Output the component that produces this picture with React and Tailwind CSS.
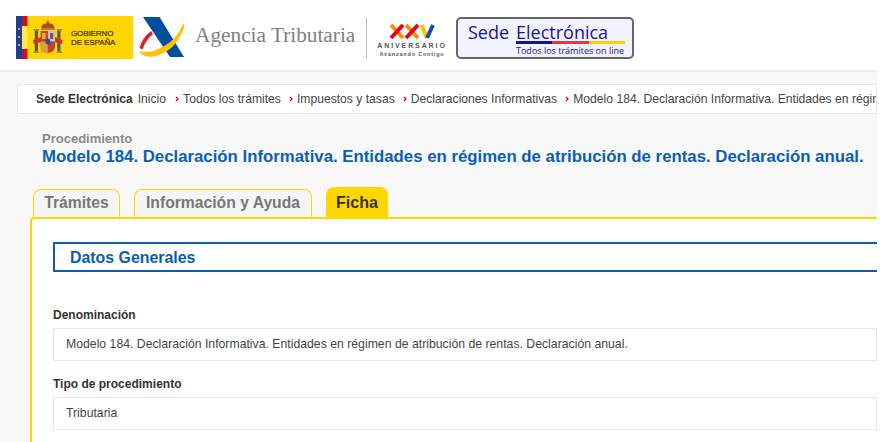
import React from 'react';

const crumbs = [
  'Todos los trámites',
  'Impuestos y tasas',
  'Declaraciones Informativas',
  'Modelo 184. Declaración Informativa. Entidades en régimen de atribución de rentas. Declaración anual.',
];

const GobiernoLogo = () => (
  <div className="flex w-[117px] h-[43px] items-center bg-[#ffd500]">
    <svg width="52" height="43" viewBox="0 0 52 43" className="shrink-0">
      <rect x="0" y="0" width="6" height="43" fill="#1d3f94" />
      <rect x="6" y="0" width="5.5" height="10" fill="#c8102e" />
      <rect x="6" y="10" width="5.5" height="23" fill="#ffe94d" />
      <rect x="6" y="33" width="5.5" height="10" fill="#c8102e" />
      <circle cx="3" cy="13" r="1" fill="#ffd500" />
      <circle cx="3" cy="21" r="1" fill="#ffd500" />
      <circle cx="3" cy="29" r="1" fill="#ffd500" />
      {/* escudo */}
      <g transform="translate(1.7,1) scale(0.9,1)">
        <rect x="19" y="14" width="3.5" height="20" fill="#5d5a4a" />
        <rect x="44" y="14" width="3.5" height="20" fill="#5d5a4a" />
        <rect x="18" y="12" width="5.5" height="2" fill="#a08a3c" />
        <rect x="43.5" y="12" width="5.5" height="2" fill="#a08a3c" />
        <rect x="18" y="34" width="5.5" height="2" fill="#a08a3c" />
        <rect x="43.5" y="34" width="5.5" height="2" fill="#a08a3c" />
        <path d="M17 23 L26 20 L26 25 L18 27 Z" fill="#c8352b" />
        <path d="M50 23 L41 20 L41 25 L49 27 Z" fill="#c8352b" />
        <path d="M26 12 Q26 6 33.5 6 Q41 6 41 12 Z" fill="#b5452c" />
        <rect x="26" y="11" width="15" height="2" fill="#a58a2e" />
        <circle cx="33.5" cy="5" r="1.2" fill="#7a6420" />
        <path d="M25.5 14 H41.5 V29 Q41.5 35 33.5 36 Q25.5 35 25.5 29 Z" fill="#c2402c" />
        <rect x="33.5" y="14" width="8" height="10.5" fill="#c9bfc4" />
        <rect x="25.5" y="24.5" width="8" height="11" fill="#d8a23a" />
        <rect x="27" y="16" width="4" height="6" fill="#d9b23f" />
        <rect x="36" y="16" width="3.5" height="6" fill="#8a4a6c" />
        <ellipse cx="33.5" cy="24.5" rx="2.6" ry="3" fill="#2c4e9a" />
      </g>
    </svg>
    <div className="pl-[3px] pt-[1px] text-[8px] leading-[9px] text-[#3a2e00] [font-family:'Liberation_Sans',sans-serif] tracking-[-0.1px] [-webkit-text-stroke:0.2px_#3a2e00] whitespace-nowrap">
      <div>GOBIERNO</div>
      <div>DE ESPAÑA</div>
    </div>
  </div>
);

const AeatLogo = () => (
  <svg width="46" height="42" viewBox="0 0 46 42" className="shrink-0">
    <path d="M4 0 H20.5 L45 40 H31 Z" fill="#004f9f" />
    <path d="M44 6 Q38 26 14 34 Q7 36 1 34 L2 37 Q8 41 17 39 Q38 33 45.5 9 Z" fill="#fdc300" />
    <path d="M12 14 Q3 21 0.5 31 L3.5 32.5 Q6 24 14 17 Z" fill="#d8232a" />
  </svg>
);

const AniversarioLogo = () => (
  <div className="flex w-[70px] flex-col items-center text-[#555] [font-family:'Liberation_Sans',sans-serif] font-bold">
    <svg width="46" height="16" viewBox="0 0 46 16">
      <path d="M2 1 L14 14" stroke="#f39200" strokeWidth="4" fill="none" />
      <path d="M14 1 L2 14" stroke="#e30613" strokeWidth="4" fill="none" />
      <path d="M17 1 L29 14" stroke="#f39200" strokeWidth="4" fill="none" />
      <path d="M29 1 L17 14" stroke="#e30613" strokeWidth="4" fill="none" />
      <path d="M32.5 1 L38 14" stroke="#fdc300" strokeWidth="4" fill="none" />
      <path d="M44 1 L38 14" stroke="#1d4f9f" strokeWidth="4" fill="none" />
    </svg>
    <div className="mt-[1px] text-[7px] leading-[9px] tracking-[1.9px] whitespace-nowrap">ANIVERSARIO</div>
    <div className="mt-[1px] text-[5.5px] leading-[6px] tracking-[0.8px] whitespace-nowrap">Avanzando Contigo</div>
  </div>
);

const SedeLogo = () => (
  <div className="flex h-[42px] w-[178px] flex-col rounded-[5px] border-2 border-[#666] bg-[#f2f2fd] pl-[10px] text-[#14149c] [font-family:'Open_Sans',sans-serif]">
    <div className="mt-[3px] flex text-[18px] leading-[20px] whitespace-nowrap">
      <span className="w-[48px]">Sede</span>
      <span>Electrónica</span>
    </div>
    <div className="ml-[48px] mt-[-1px] flex h-[3px] w-[109px] shrink-0">
      <div className="flex-1 bg-[#14149c]" />
      <div className="flex-1 bg-[#e03a3e]" />
      <div className="flex-1 bg-[#fdd000]" />
    </div>
    <div className="ml-[48px] mt-[1px] text-[9px] leading-[12px] whitespace-nowrap">Todos los trámites on line</div>
  </div>
);

const Field = ({ label, value }) => (
  <div>
    <div className="text-xs leading-[14px] font-bold text-[#333]">{label}</div>
    <div className="mt-[6px] flex h-[33px] items-center border border-[#e3e8ec] pl-3 text-[12.25px] text-[#444]">{value}</div>
  </div>
);

export default function App() {
  return (
    <div className="h-[442px] w-[880px] overflow-hidden bg-white [font-family:'Liberation_Sans',Arial,sans-serif]">
      <div className="h-full w-[877px] overflow-hidden bg-[#f8f8f8]">
        {/* Cabecera */}
        <header className="flex h-[72px] items-center border-b-2 border-[#e9edf0] bg-white pt-[5px] pl-4">
          <GobiernoLogo />
          <div className="ml-[6px]"><AeatLogo /></div>
          <span className="mb-[3px] ml-[10px] w-[160px] text-[21.3px] leading-none text-[#808080] [font-family:'Liberation_Serif',serif] whitespace-nowrap">Agencia Tributaria</span>
          <div className="ml-[11px] h-10 w-px bg-[#bbb]" />
          <div className="ml-[10px] mt-[6px]"><AniversarioLogo /></div>
          <div className="ml-[9px]"><SedeLogo /></div>
        </header>

        {/* Migas */}
        <nav className="ml-[17px] mt-3 flex h-[30px] items-center overflow-hidden border border-[#e3e8ec] bg-white pl-[18px] text-[12.15px] whitespace-nowrap text-[#444]">
          <span className="text-xs font-bold text-[#333]">Sede Electrónica</span>
          <span className="ml-[5px] mr-[1px]">Inicio</span>
          {crumbs.map((c) => (
            <span key={c} className="flex items-center">
              <svg width="4" height="6" viewBox="0 0 4 6" className="ml-[8px] mr-[4px] shrink-0">
                <path d="M1 1 L3 3 L1 5" stroke="#d0021b" strokeWidth="1.2" fill="none" />
              </svg>
              {c}
            </span>
          ))}
        </nav>

        {/* Titulo */}
        <div className="ml-[42px] mt-[17px] whitespace-nowrap">
          <div className="text-[13px] leading-[15px] font-bold text-[#888]">Procedimiento</div>
          <h1 className="mt-[1px] text-[16.8px] leading-[19px] font-bold text-[#0a5fb4]">
            Modelo 184. Declaración Informativa. Entidades en régimen de atribución de rentas. Declaración anual.
          </h1>
        </div>

        {/* Pestañas */}
        <div className="ml-[33px] mt-[21px] flex h-[30px] items-end gap-[14px] text-[15.7px] font-bold">
          <div className="flex h-[28px] w-[87px] items-center justify-center rounded-t-[8px] border border-b-0 border-[#ffd700] bg-[#f5f5f5] pb-[2px] text-[#777]">Trámites</div>
          <div className="flex h-[28px] w-[178px] items-center justify-center rounded-t-[8px] border border-b-0 border-[#ffd700] bg-[#f5f5f5] pb-[2px] text-[#777]">Información y Ayuda</div>
          <div className="flex h-[30px] w-[62px] items-center justify-center rounded-t-[8px] bg-[#ffd700] pt-[2px] text-base text-[#333]">Ficha</div>
        </div>

        {/* Ficha */}
        <section className="ml-[30px] h-[260px] rounded-tl-[4px] border-t-2 border-l-2 border-[#ffd700] bg-white pt-[23px] pl-[21px]">
          <div className="flex h-[30px] items-center border-y-2 border-l-2 border-[#0a5fa8] pt-[1px] pl-[15px] text-[15.9px] font-bold text-[#0a5fa8]">Datos Generales</div>
          <div className="mt-[36px] flex flex-col gap-[16px]">
            <Field label="Denominación" value="Modelo 184. Declaración Informativa. Entidades en régimen de atribución de rentas. Declaración anual." />
            <Field label="Tipo de procedimiento" value="Tributaria" />
          </div>
        </section>
      </div>
    </div>
  );
}
